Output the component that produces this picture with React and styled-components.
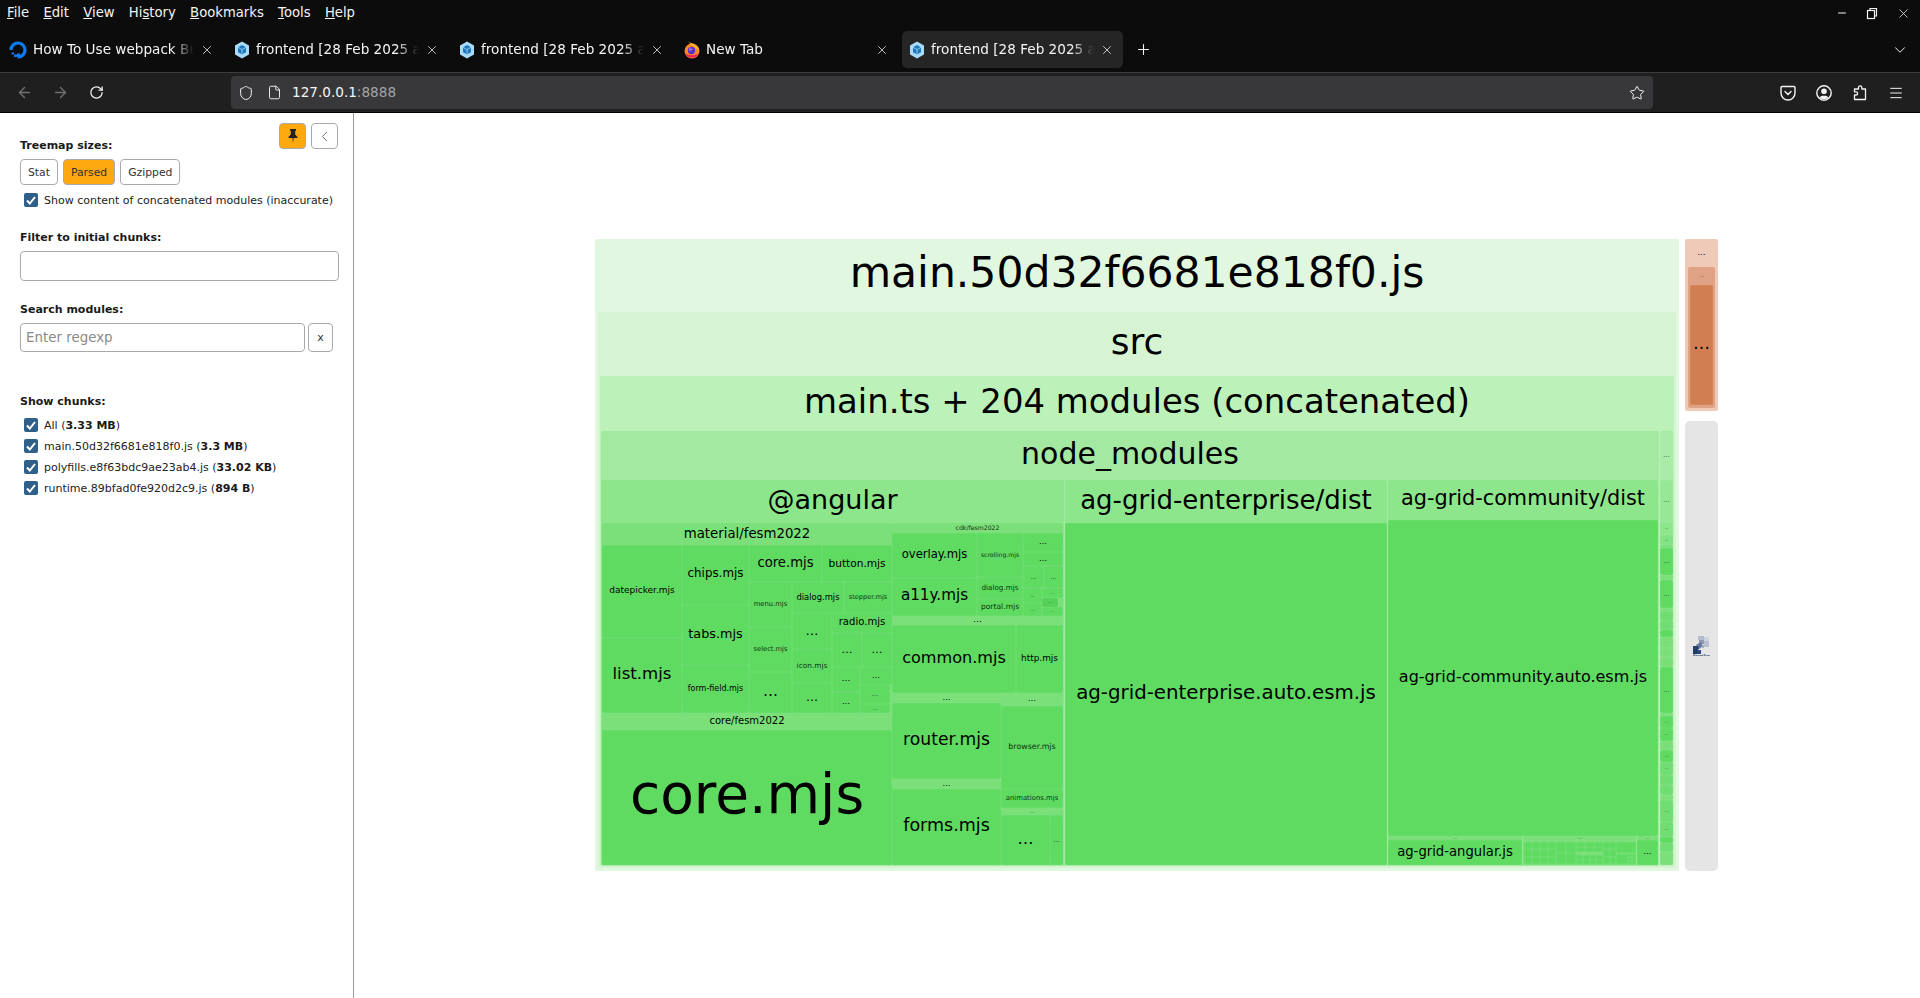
// react
import React from 'react'

// styled
import styled, { createGlobalStyle } from 'styled-components'

// icons
import { ArrowLeft, ArrowRight, RotateCw, Shield, File, Star, X, Plus, ChevronDown, ChevronLeft, Minus, Menu } from 'lucide-react'

const GlobalStyle = createGlobalStyle`
	html, body, #root {
		margin: 0;
		height: 100%;
		overflow: hidden;
		background: #fff;
		font-family: "DejaVu Sans", sans-serif;
	}
	* { box-sizing: border-box; }
`

// treemap data, page coordinates
const LEVELS = ['#e1f7df', '#d6f4d4', '#bcf1ba', '#a3e9a1', '#8ee68c', '#7be07a']
const LEAF = '#5fdb62'
const DOTS = '…'

const n = (x0, y0, x1, y1, label, fs, head, kids, c) => ({ x0, y0, x1, y1, label, fs, head, kids, c })
const leaf = (x0, y0, x1, y1, label, fs, c) => n(x0, y0, x1, y1, label, fs, 0, null, c)

const grid = (x0, y0, x1, y1, cols, rows) => {
	const out = []
	const w = (x1 - x0) / cols
	const h = (y1 - y0) / rows
	for (let i = 0; i < cols; i++) {
		for (let j = 0; j < rows; j++) {
			out.push(leaf(x0 + i * w, y0 + j * h, x0 + (i + 1) * w, y0 + (j + 1) * h))
		}
	}
	return out
}

const material = n(602, 523, 892, 713, 'material/fesm2022', 13.3, 22, [
	leaf(602, 545, 682, 638, 'datepicker.mjs', 9),
	leaf(602, 638, 682, 713, 'list.mjs', 16.6),
	leaf(682, 545, 749, 605, 'chips.mjs', 11.9),
	leaf(682, 605, 749, 665, 'tabs.mjs', 12.8),
	leaf(682, 665, 749, 713, 'form-field.mjs', 8),
	leaf(749, 545, 822, 582, 'core.mjs', 13.2),
	leaf(822, 545, 892, 582, 'button.mjs', 10.6),
	leaf(749, 582, 792, 627, 'menu.mjs', 6.8),
	leaf(749, 627, 792, 672, 'select.mjs', 6.7),
	leaf(749, 672, 792, 713, DOTS, 15),
	leaf(792, 582, 844, 613, 'dialog.mjs', 8.4),
	leaf(844, 582, 892, 613, 'stepper.mjs', 6.6),
	leaf(792, 613, 832, 649, DOTS, 13),
	leaf(792, 649, 832, 683, 'icon.mjs', 7.4),
	leaf(792, 683, 832, 713, DOTS, 12),
	leaf(832, 613, 892, 633, 'radio.mjs', 10.1),
	leaf(832, 633, 862, 667, DOTS, 11),
	leaf(862, 633, 892, 667, DOTS, 11),
	leaf(832, 667, 860, 692, DOTS, 9),
	leaf(832, 692, 860, 713, DOTS, 8),
	leaf(860, 667, 892, 685, DOTS, 8),
	leaf(860, 685, 890, 704, DOTS, 7),
	leaf(860, 704, 890, 713, DOTS, 5),
])

const core = n(602, 713, 892, 865, 'core/fesm2022', 10, 17, [
	leaf(602, 730, 892, 865, 'core.mjs', 55),
])

const cdk = n(892, 523, 1063, 616, 'cdk/fesm2022', 6.2, 10, [
	leaf(892, 533, 977, 578, 'overlay.mjs', 11.6),
	leaf(892, 578, 977, 616, 'a11y.mjs', 15.2),
	leaf(977, 533, 1023, 577, 'scrolling.mjs', 6.1),
	leaf(977, 577, 1023, 599, 'dialog.mjs', 7.2),
	leaf(977, 599, 1023, 616, 'portal.mjs', 7.6),
	leaf(1023, 533, 1063, 552, DOTS, 8),
	leaf(1023, 552, 1063, 566, DOTS, 8),
	leaf(1023, 566, 1044, 588, DOTS, 6),
	leaf(1044, 566, 1063, 588, DOTS, 6),
	leaf(1023, 588, 1042, 603, DOTS, 5),
	leaf(1023, 603, 1042, 616, DOTS, 5),
	leaf(1042, 588, 1063, 598, DOTS, 4),
	leaf(1042, 598, 1058, 607, DOTS, 4, '#55d058'),
	leaf(1042, 607, 1063, 616, DOTS, 4),
])

const common = n(892, 616, 1063, 693, DOTS, 9, 9, [
	leaf(892, 625, 1016, 693, 'common.mjs', 16.1),
	leaf(1016, 625, 1063, 693, 'http.mjs', 8.9),
])

const router = n(892, 693, 1001, 779, DOTS, 8, 10, [
	leaf(892, 703, 1001, 779, 'router.mjs', 17.2),
])

const forms = n(892, 779, 1001, 865, DOTS, 8, 10, [
	leaf(892, 789, 1001, 865, 'forms.mjs', 17.5),
])

const browser = n(1001, 693, 1063, 808, DOTS, 8, 13, [
	leaf(1001, 706, 1063, 789, 'browser.mjs', 7.9),
	leaf(1001, 789, 1063, 808, 'animations.mjs', 6.9),
])

const rest = n(1001, 808, 1063, 865, DOTS, 5, 7, [
	leaf(1001, 815, 1050, 865, DOTS, 16),
	leaf(1050, 815, 1063, 865, DOTS, 6),
])

const angular = n(601, 480, 1064, 865, '@angular', 27, 43, [material, core, cdk, common, router, forms, browser, rest])

const enterprise = n(1065, 480, 1387, 865, 'ag-grid-enterprise/dist', 26, 43, [
	leaf(1065, 523, 1387, 865, 'ag-grid-enterprise.auto.esm.js', 19.8),
])

const community = n(1388, 480, 1658, 865, 'ag-grid-community/dist', 20.8, 40, [
	leaf(1388, 520, 1658, 836, 'ag-grid-community.auto.esm.js', 16),
	n(1388, 836, 1522, 865, DOTS, 4, 4, [leaf(1388, 840, 1522, 865, 'ag-grid-angular.js', 13.2)]),
	n(1523, 836, 1636, 865, DOTS, 4, 4, [
		n(1523, 840, 1556, 865, '', 3, 2, grid(1524, 842, 1556, 864, 4, 3)),
		n(1556, 840, 1576, 865, '', 3, 2, grid(1556, 842, 1576, 864, 2, 2)),
		n(1576, 840, 1603, 865, '', 3, 2, [...grid(1576, 842, 1603, 852, 3, 2), ...grid(1576, 855, 1603, 864, 4, 2)]),
		n(1603, 840, 1616, 865, '', 3, 2, grid(1603, 842, 1616, 864, 2, 3)),
		n(1616, 840, 1636, 865, '', 3, 2, [...grid(1616, 842, 1636, 853, 1, 1), ...grid(1616, 854, 1628, 864, 1, 1), ...grid(1628, 854, 1636, 864, 2, 3)]),
	]),
	n(1637, 836, 1658, 865, DOTS, 4, 4, [leaf(1637, 840, 1658, 865, DOTS, 8)]),
])

const nodeModules = n(601, 431, 1659, 866, 'node_modules', 30, 49, [angular, enterprise, community])

// right hand strip next to node_modules
const stripRows = [
	[432, 480, '#a9eca7', DOTS, 7], [480, 522, '#97e895', DOTS, 7], [522, 535, '#8ee68c', DOTS, 4],
	[535, 545, '#82e382', DOTS, 4], [545, 548, '#7be07a'], [548, 575, LEAF, DOTS, 7], [575, 580, '#7be07a'],
	[580, 608, LEAF, DOTS, 6], [608, 611, '#7be07a'], [611, 621, '#70de72', DOTS, 3], [621, 630, '#70de72', DOTS, 3],
	[630, 637, LEAF], [637, 648, '#7be07a', DOTS, 3], [648, 657, '#7be07a', DOTS, 3],
	[657, 667, '#7be07a', DOTS, 3], [667, 713, LEAF, DOTS, 6], [713, 716, '#7be07a'], [716, 728, LEAF, DOTS, 4],
	[728, 741, LEAF, DOTS, 4], [741, 750, '#7be07a', DOTS, 3], [750, 762, LEAF, DOTS, 4], [762, 775, '#70de72', DOTS, 4],
	[775, 785, '#70de72', DOTS, 3], [785, 795, '#70de72', DOTS, 3], [795, 800, '#7be07a'], [800, 822, '#70de72', DOTS, 5],
	[822, 837, '#70de72', DOTS, 4], [837, 843, LEAF], [843, 852, '#70de72'], [852, 865, '#7be07a'],
]

const strip = n(1660, 431, 1673, 865, '', 4, 1, stripRows.map(r => leaf(1660, r[0], 1673, r[1], r[3], r[4], r[2])))

const mainChunk = n(595, 239, 1679, 871, 'main.50d32f6681e818f0.js', 42.5, 73, [
	n(598, 312, 1676, 868, 'src', 36, 64, [
		n(600, 376, 1674, 866, 'main.ts + 204 modules (concatenated)', 33.9, 55, [nodeModules, strip]),
	]),
])

const polyfills = n(1685, 239, 1718, 411, DOTS, 8, 28, [
	n(1688, 267, 1715, 408, DOTS, 5, 18, [
		leaf(1690, 285, 1713, 405, DOTS, 17, '#d17f52'),
	], '#e0a284'),
], '#efcab8')

const OX = 595
const OY = 239

const FoamTreeLogo = () => (
	<LogoSvg viewBox='0 0 17 20'>
		<rect x='5' y='0' width='6' height='4' fill='#b3bccd'/>
		<rect x='11' y='1' width='5' height='4' fill='#cdd3df'/>
		<rect x='6' y='4' width='5' height='4' fill='#8d99b2'/>
		<rect x='11' y='5' width='5' height='6' fill='#b9c1d1'/>
		<polygon points='3,9 8,6 10,10 6,13' fill='#67789b'/>
		<rect x='9' y='9' width='2' height='3' fill='#a5afc4'/>
		<polygon points='0,10 5,10 6,13 3,15 0,14' fill='#24406f'/>
		<rect x='0' y='14' width='4' height='4' fill='#1e3a6b'/>
		<rect x='4' y='14' width='4' height='4' fill='#2d4a7a'/>
		<text x='0' y='20.5' fontSize='3.4' fontWeight='bold' fill='#24406f'>FoamTree</text>
	</LogoSvg>
)

const Node = ({ node, depth, px, py }) => {
	const { x0, y0, x1, y1, label, fs, head, kids, c } = node
	const color = c || (kids ? LEVELS[Math.min(depth, LEVELS.length - 1)] : LEAF)
	const pos = { left: x0 - px, top: y0 - py, width: x1 - x0, height: y1 - y0, background: color }
	return (
		<Cell style={pos} $leaf={!kids}>
			{label && (
				<CellLabel $fs={fs} style={{ height: kids ? head : '100%' }}>{label}</CellLabel>
			)}
			{kids && kids.map((kid, i) => <Node key={i} node={kid} depth={depth + 1} px={x0} py={y0}/>)}
		</Cell>
	)
}

const TABS = [
	{ title: 'How To Use webpack Bundle Analyzer', icon: 'ocean' },
	{ title: 'frontend [28 Feb 2025 at 12:41]', icon: 'webpack' },
	{ title: 'frontend [28 Feb 2025 at 12:41]', icon: 'webpack' },
	{ title: 'New Tab', icon: 'firefox' },
	{ title: 'frontend [28 Feb 2025 at 12:41]', icon: 'webpack', active: true },
]

const MENU = [['F', 'ile'], ['E', 'dit'], ['V', 'iew'], ['Hi', 's', 'tory'], ['B', 'ookmarks'], ['T', 'ools'], ['H', 'elp']]

const Favicon = ({ kind }) => {
	if (kind === 'ocean') {
		return (
			<svg width='18' height='18' viewBox='0 0 18 18'>
				<path d='M8.500 16A7 7 0 1 0 2 9' fill='none' stroke='#0a7cf5' strokeWidth='3.200'/>
				<path d='M8 12.500h3v3H8zM5 13.500h3v2.500H5zM2.500 11.500H5v2H2.500z' fill='#0a7cf5'/>
			</svg>
		)
	}
	if (kind === 'firefox') {
		return (
			<svg width='16' height='18' viewBox='0 0 16 18'>
				<circle cx='8' cy='10' r='7.500' fill='#ff8a1f'/>
				<path d='M1 12a7.500 7.500 0 0 0 14 0c-3 3-10 3-14 0z' fill='#f3235a'/>
				<path d='M4 .500c2 2 5 1 7 4 3 1 4 3 4 5-2-3-7-5-11-9z' fill='#ffc42e'/>
				<circle cx='7.500' cy='9.500' r='3.700' fill='#5a32c8'/>
				<circle cx='6.500' cy='8.300' r='1.700' fill='#8c6ae8'/>
			</svg>
		)
	}
	return (
		<svg width='16' height='18' viewBox='0 0 16 18'>
			<polygon points='8,0.500 15,4.500 15,13.500 8,17.500 1,13.500 1,4.500' fill='#a9dcf7'/>
			<polygon points='8,4 12,6.300 12,11.300 8,13.600 4,11.300 4,6.300' fill='#1e78c0'/>
			<path d='M4 6.300 8 8.600 12 6.300M8 8.600v5' stroke='#a9dcf7' strokeWidth='.8' fill='none'/>
		</svg>
	)
}

const PocketIcon = () => (
	<svg width='16' height='16' viewBox='0 0 16 16' fill='none' stroke='currentColor' strokeWidth='1.400'>
		<path d='M2 1.500h12a1 1 0 0 1 1 1V8A7 7 0 0 1 1 8V2.500a1 1 0 0 1 1-1z'/>
		<path d='M5 6.500 8 9.500l3-3' strokeLinecap='round'/>
	</svg>
)

const AccountIcon = () => (
	<svg width='16' height='16' viewBox='0 0 16 16'>
		<circle cx='8' cy='8' r='7.200' fill='none' stroke='currentColor' strokeWidth='1.400'/>
		<circle cx='8' cy='6.300' r='2.800' fill='currentColor'/>
		<path d='M3.500 12.500c1-2.200 8-2.200 9 0-2 2-7 2-9 0z' fill='currentColor'/>
	</svg>
)

const ExtensionIcon = () => (
	<svg width='16' height='16' viewBox='0 0 16 16' fill='none' stroke='currentColor' strokeWidth='1.300'>
		<path d='M6.500 4V2.500a1.700 1.700 0 0 1 3.400 0V4h3.600v10.500H2.500V10H4a1.600 1.600 0 0 0 0-3.200H2.500V4z' strokeLinejoin='round'/>
	</svg>
)

const PinIcon = () => (
	<svg width='10' height='14' viewBox='0 0 10 14' fill='#222'>
		<path d='M2 0h6v1.500L7.200 2v3.500L9.500 8v1H5.600l-.6 5-.6-5H.5V8l2.300-2.500V2L2 1.500z'/>
	</svg>
)

const RestoreIcon = () => (
	<svg width='12' height='13' viewBox='0 0 12 13' fill='none' stroke='currentColor' strokeWidth='1.200'>
		<rect x='1.500' y='3.500' width='7' height='8'/>
		<path d='M4 3.500V1.500h6.500v7.500H8.500'/>
	</svg>
)

const Check = () => (
	<CheckBox>
		<svg width='10' height='9' viewBox='0 0 10 9' fill='none' stroke='#fff' strokeWidth='2'>
			<path d='M1 4.500 3.800 7.500 9 1'/>
		</svg>
	</CheckBox>
)

const CHUNKS = [
	['All', '3.33 MB'],
	['main.50d32f6681e818f0.js', '3.3 MB'],
	['polyfills.e8f63bdc9ae23ab4.js', '33.02 KB'],
	['runtime.89bfad0fe920d2c9.js', '894 B'],
]

export default function App () {
	return (
		<Page>
			<GlobalStyle/>
			<Chrome>
				<MenuBar>
					<MenuItems>
						{MENU.map((m, i) => (
							<MenuItem key={i}>
								{m.length === 3 ? <>{m[0]}<u>{m[1]}</u>{m[2]}</> : <><u>{m[0]}</u>{m[1]}</>}
							</MenuItem>
						))}
					</MenuItems>
					<WindowButtons>
						<Minus size={12}/>
						<RestoreIcon/>
						<X size={15} strokeWidth={1.2}/>
					</WindowButtons>
				</MenuBar>
				<TabBar>
					{TABS.map((t, i) => (
						<Tab key={i} $active={t.active}>
							<Favicon kind={t.icon}/>
							<TabTitle>{t.title}</TabTitle>
							<X size={14} strokeWidth={1.3}/>
						</Tab>
					))}
					<NewTab><Plus size={17} strokeWidth={1.5}/></NewTab>
					<TabListButton><ChevronDown size={18} strokeWidth={1.3}/></TabListButton>
				</TabBar>
				<Toolbar>
					<NavButton $dim><ArrowLeft size={17}/></NavButton>
					<NavButton $dim><ArrowRight size={17}/></NavButton>
					<NavButton><RotateCw size={15}/></NavButton>
					<UrlBar>
						<Shield size={16} strokeWidth={1.5}/>
						<File size={15} strokeWidth={1.5}/>
						<UrlText>127.0.0.1<UrlPort>:8888</UrlPort></UrlText>
						<UrlStar><Star size={16} strokeWidth={1.5}/></UrlStar>
					</UrlBar>
					<ToolIcons>
						<PocketIcon/>
						<AccountIcon/>
						<ExtensionIcon/>
						<Menu size={16} strokeWidth={1.5}/>
					</ToolIcons>
				</Toolbar>
			</Chrome>
			<Body>
				<Sidebar>
					<SideButtons>
						<PinButton><PinIcon/></PinButton>
						<BackButton><ChevronLeft size={17} strokeWidth={1.2}/></BackButton>
					</SideButtons>
					<SideLabel>Treemap sizes:</SideLabel>
					<SizeButtons>
						<SizeButton>Stat</SizeButton>
						<SizeButton $on>Parsed</SizeButton>
						<SizeButton>Gzipped</SizeButton>
					</SizeButtons>
					<CheckRow $top={8}><Check/>Show content of concatenated modules (inaccurate)</CheckRow>
					<SideLabel $top={23}>Filter to initial chunks:</SideLabel>
					<FilterInput readOnly/>
					<SideLabel $top={21}>Search modules:</SideLabel>
					<SearchRow>
						<SearchInput readOnly placeholder='Enter regexp'/>
						<ClearButton>x</ClearButton>
					</SearchRow>
					<SideLabel $top={42}>Show chunks:</SideLabel>
					<ChunkList>
						{CHUNKS.map(([name, size]) => (
							<CheckRow key={name}><Check/>{name} (<b>{size}</b>)</CheckRow>
						))}
					</ChunkList>
				</Sidebar>
				<Stage>
					<Treemap>
						<Node node={mainChunk} depth={0} px={OX} py={OY}/>
						<Node node={polyfills} depth={0} px={OX} py={OY}/>
						<GrayChunk><FoamTreeLogo/></GrayChunk>
					</Treemap>
				</Stage>
			</Body>
		</Page>
	)
}

const Page = styled.div`
	display: flex;
	flex-direction: column;
	height: 998px;
	overflow: hidden;
`

const Chrome = styled.header`
	flex: none;
	background: #0c0c0d;
	color: #f4f4f4;
	font-size: 13.6px;
`

const MenuBar = styled.div`
	display: flex;
	align-items: center;
	justify-content: space-between;
	height: 31px;
	padding: 0 9px 5px 0;
`

const MenuItems = styled.nav`
	display: flex;
	padding-left: 7px;
	font-size: 13.2px;
`

const MenuItem = styled.span`
	padding-right: 14.3px;
	line-height: 16px;
`

const WindowButtons = styled.div`
	display: flex;
	align-items: center;
	gap: 18px;
`

const TabBar = styled.div`
	display: flex;
	align-items: center;
	height: 41px;
	padding: 0 0 4px 2px;
	gap: 4px;
`

const Tab = styled.div`
	display: flex;
	align-items: center;
	width: 221px;
	height: 37px;
	padding: 0 9px 0 7px;
	gap: 6px;
	border-radius: 5px;
	background: ${props => props.$active ? '#252526' : 'transparent'};
`

const TabTitle = styled.span`
	flex: 1;
	overflow: hidden;
	padding-bottom: 2px;
	white-space: nowrap;
	-webkit-mask-image: linear-gradient(to right, #000 86%, transparent 100%);
	mask-image: linear-gradient(to right, #000 86%, transparent 100%);
`

const NewTab = styled.div`
	display: flex;
	margin-left: 8px;
`

const TabListButton = styled.div`
	display: flex;
	margin-left: auto;
	padding-right: 11px;
`

const Toolbar = styled.div`
	display: flex;
	align-items: center;
	height: 41px;
	padding-left: 6px;
	background: #1f1f20;
	border-top: 1px solid #3b3b3d;
	border-bottom: 1px solid #000;
`

const NavButton = styled.div`
	display: flex;
	justify-content: center;
	width: 36px;
	color: ${props => props.$dim ? '#6f6f70' : '#f4f4f4'};
`

const UrlBar = styled.div`
	display: flex;
	align-items: center;
	width: 1422px;
	height: 33px;
	margin-left: 117px;
	padding: 0 8px 0 7px;
	border-radius: 4px;
	background: #38383a;
	gap: 13px;
`

const UrlText = styled.span`
	margin-left: -3px;
	padding-bottom: 2px;
`

const UrlPort = styled.span`
	color: #a5a5a6;
`

const UrlStar = styled.span`
	display: flex;
	margin-left: auto;
`

const ToolIcons = styled.div`
	display: flex;
	align-items: center;
	gap: 20px;
	margin-left: 127px;
`

const Body = styled.main`
	flex: 1;
	display: flex;
	min-height: 0;
`

const Sidebar = styled.aside`
	position: relative;
	flex: none;
	width: 354px;
	padding: 25px 0 0 20px;
	border-right: 1px solid #999;
	font-size: 11px;
	color: #222;
`

const SideButtons = styled.div`
	position: absolute;
	top: 10px;
	right: 15px;
	display: flex;
	gap: 5px;
`

const SideBtn = styled.div`
	display: flex;
	align-items: center;
	justify-content: center;
	width: 27px;
	height: 26px;
	border: 1px solid #aaa;
	border-radius: 4px;
`

const PinButton = styled(SideBtn)`
	background: #ffa80f;
`

const BackButton = styled(SideBtn)`
	color: #555;
	background: #fff;
`

const SideLabel = styled.div`
	height: 14px;
	margin-top: ${props => props.$top || 0}px;
	font-size: 11px;
	font-weight: bold;
	line-height: 16px;
	color: #1a1a1a;
`

const SizeButtons = styled.div`
	display: flex;
	gap: 5px;
	margin-top: 7px;
`

const SizeButton = styled.div`
	display: flex;
	align-items: center;
	height: 26px;
	padding: 0 7px;
	border: 1px solid #aaa;
	border-radius: 4px;
	background: ${props => props.$on ? '#ffa80f' : '#fff'};
	font-size: 10.8px;
	color: #333;
`

const CheckRow = styled.div`
	display: flex;
	align-items: center;
	height: 14px;
	margin-top: ${props => props.$top || 0}px;
	padding-left: 4px;
	white-space: pre;
	b { color: #1a1a1a; }
`

const CheckBox = styled.span`
	display: flex;
	align-items: center;
	justify-content: center;
	width: 14px;
	height: 14px;
	margin-right: 6px;
	border-radius: 2px;
	background: #2f6089;
`

const FilterInput = styled.input`
	display: block;
	width: 319px;
	height: 30px;
	margin-top: 7px;
	border: 1px solid #aaa;
	border-radius: 4px;
	outline: none;
`

const SearchRow = styled.div`
	display: flex;
	gap: 3px;
	margin-top: 7px;
`

const SearchInput = styled.input`
	width: 285px;
	height: 29px;
	padding: 0 5px;
	border: 1px solid #aaa;
	border-radius: 4px;
	outline: none;
	font-family: inherit;
	font-size: 13.4px;
	&::placeholder { color: #8a8a8a; opacity: 1; }
`

const ClearButton = styled.div`
	display: flex;
	align-items: center;
	justify-content: center;
	width: 25px;
	height: 29px;
	border: 1px solid #aaa;
	border-radius: 4px;
	font-size: 11px;
	color: #333;
`

const ChunkList = styled.div`
	display: flex;
	flex-direction: column;
	gap: 7px;
	margin-top: 10px;
`

const Stage = styled.section`
	flex: 1;
	padding: 126px 0 0 241px;
	background: #fff;
`

const Treemap = styled.div`
	position: relative;
	width: 1123px;
	height: 632px;
`

const Cell = styled.div`
	position: absolute;
	border-radius: 2px;
	box-shadow: ${props => props.$leaf ? 'inset 0 0 0 1px rgba(255, 255, 255, .05)' : 'none'};
`

const CellLabel = styled.div`
	display: flex;
	align-items: center;
	justify-content: center;
	overflow: hidden;
	padding-bottom: .12em;
	font-size: ${props => props.$fs}px;
	line-height: 1;
	white-space: nowrap;
	color: ${props => props.$fs < 8 ? '#0f3512' : '#000'};
`

const GrayChunk = styled.div`
	position: absolute;
	left: 1090px;
	top: 182px;
	width: 33px;
	height: 450px;
	display: flex;
	align-items: center;
	justify-content: center;
	border-radius: 5px;
	background: #e5e5e5;
`

const LogoSvg = styled.svg`
	width: 17px;
	height: 20px;
`
